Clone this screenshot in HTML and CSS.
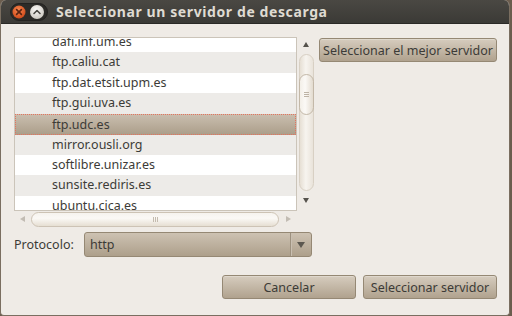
FILE: index.html
```html
<!DOCTYPE html>
<html lang="es">
<head>
<meta charset="utf-8">
<link rel="stylesheet" href="styles.css">
</head>
<body>
<div class="window">
  <div class="titlebar">
    <div class="wbuttons">
      <svg width="38" height="18" viewBox="0 0 38 18">
        <defs>
          <radialGradient id="gc" cx="0.45" cy="0.35" r="0.7">
            <stop offset="0" stop-color="#f7874f"/>
            <stop offset="1" stop-color="#cc4516"/>
          </radialGradient>
          <radialGradient id="gm" cx="0.45" cy="0.35" r="0.7">
            <stop offset="0" stop-color="#fbfaf8"/>
            <stop offset="1" stop-color="#c9c5bd"/>
          </radialGradient>
        </defs>
        <rect x="0.5" y="0.5" width="37" height="17" rx="8.5" fill="#2c2b28" stroke="#232220"/>
        <circle cx="9" cy="9" r="6.5" fill="url(#gc)"/>
        <path d="M6.6 6.6 L11.4 11.4 M11.4 6.6 L6.6 11.4" stroke="#5a2412" stroke-width="1.6" stroke-linecap="round"/>
        <circle cx="27" cy="9" r="7" fill="url(#gm)"/>
        <path d="M24 10.5 L27 7.5 L30 10.5" fill="none" stroke="#4a4843" stroke-width="1.6" stroke-linecap="round" stroke-linejoin="round"/>
      </svg>
    </div>
    <div class="title">Seleccionar un servidor de descarga</div>
  </div>
  <div class="content">
    <div class="top">
      <div class="listwrap">
        <div class="list">
          <div class="rows">
            <div class="row">dafi.inf.um.es</div>
            <div class="row alt">ftp.caliu.cat</div>
            <div class="row">ftp.dat.etsit.upm.es</div>
            <div class="row alt">ftp.gui.uva.es</div>
            <div class="row sel">ftp.udc.es</div>
            <div class="row alt">mirror.ousli.org</div>
            <div class="row">softlibre.unizar.es</div>
            <div class="row alt">sunsite.rediris.es</div>
            <div class="row">ubuntu.cica.es</div>
          </div>
        </div>
        <div class="vscroll">
          <div class="arrow up"></div>
          <div class="vtrough">
            <div class="vthumb"><span class="grip-h"></span></div>
          </div>
          <div class="arrow down"></div>
        </div>
        <div class="hscroll">
          <div class="arrow left"></div>
          <div class="htrough"><span class="grip-v"></span></div>
          <div class="arrow right"></div>
        </div>
      </div>
      <div class="side">
        <button class="btn best">Seleccionar el mejor servidor</button>
      </div>
    </div>
    <div class="protocol">
      <span class="plabel">Protocolo:</span>
      <div class="combo">
        <span class="cval">http</span>
        <span class="csep"></span>
        <span class="carrow"></span>
      </div>
    </div>
    <div class="actions">
      <button class="btn cancel">Cancelar</button>
      <button class="btn ok">Seleccionar servidor</button>
    </div>
  </div>
</div>
</body>
</html>
```
FILE: styles.css
```css
* { box-sizing: border-box; }
html, body { margin: 0; padding: 0; }
body {
  width: 512px;
  height: 316px;
  background: #6b5d4e;
  font-family: "Noto Sans", "Open Sans", sans-serif;
  font-size: 12.5px;
  color: #3c3b37;
  overflow: hidden;
}
.window {
  width: 510px;
  height: 316px;
  display: flex;
  flex-direction: column;
  background: #efebe6;
  border-radius: 6px 6px 4px 4px;
  overflow: hidden;
  border: 1px solid #7a6e60;
  border-top: none;
}
.titlebar {
  height: 24px;
  flex: none;
  display: flex;
  align-items: center;
  background: linear-gradient(#4a4843, #3b3a36);
  border-bottom: 1px solid #2a2926;
  padding-left: 9px;
}
.wbuttons { display: flex; height: 18px; }
.title {
  margin-left: 8px;
  font-weight: bold;
  font-size: 14px;
  color: #dfdbd2;
  letter-spacing: 0.6px;
}
.content {
  flex: 1;
  display: flex;
  flex-direction: column;
  padding: 13px 12px 0 13px;
}
.top { display: flex; gap: 5px; }
.listwrap {
  display: grid;
  grid-template-columns: 283px 17px;
  grid-template-rows: 174px 16px;
}
.list {
  background: #fff;
  border: 1px solid #cbc4b9;
  overflow: hidden;
}
.rows { margin-top: -6px; }
.row {
  height: 20.4px;
  line-height: 20.4px;
  padding-left: 37px;
  white-space: nowrap;
}
.row.alt { background: #edebe8; }
.row.sel {
  background: linear-gradient(#cabfb0, #ab9d89);
  outline: 1px dotted #e5735e;
  outline-offset: -1px;
  height: 21px;
  line-height: 21px;
}
.vscroll {
  display: flex;
  flex-direction: column;
  align-items: center;
  padding-left: 1px;
}
.arrow { width: 0; height: 0; border-style: solid; }
.arrow.up {
  margin-top: 5px;
  border-width: 0 3.5px 5px 3.5px;
  border-color: transparent transparent #55524c transparent;
}
.arrow.down {
  margin-top: 7px;
  border-width: 5px 3.5px 0 3.5px;
  border-color: #55524c transparent transparent transparent;
}
.vtrough {
  margin-top: 7px;
  width: 15px;
  height: 137px;
  border-radius: 8px;
  border: 1px solid #d8d0c4;
  background: linear-gradient(90deg, #e6dfd4, #f7f4ef 45%, #e9e3da);
  padding-top: 19px;
}
.vthumb {
  margin-left: -1px;
  width: 15px;
  height: 41px;
  border-radius: 8px;
  border: 1px solid #c3b8a8;
  background: linear-gradient(90deg, #f3efe8, #fbf9f6 40%, #e3dbcf);
  display: flex;
  align-items: center;
  justify-content: center;
}
.grip-h {
  width: 5px;
  height: 5px;
  border-top: 1px solid #bdb3a5;
  border-bottom: 1px solid #bdb3a5;
}
.grip-h::after {
  content: "";
  display: block;
  border-top: 1px solid #bdb3a5;
  margin-top: 1px;
}
.hscroll {
  grid-column: 1 / 3;
  display: flex;
  align-items: center;
  padding-left: 6px;
}
.arrow.left {
  border-width: 3.5px 5px 3.5px 0;
  border-color: transparent #c2bcb3 transparent transparent;
}
.arrow.right {
  margin-left: 7px;
  border-width: 3.5px 0 3.5px 5px;
  border-color: transparent transparent transparent #c2bcb3;
}
.htrough {
  margin-left: 6px;
  width: 248px;
  height: 15px;
  border-radius: 8px;
  border: 1px solid #cdc3b5;
  background: linear-gradient(#f6f3ee, #fbf9f6 40%, #e6dfd3);
  display: flex;
  align-items: center;
  justify-content: center;
}
.grip-v {
  width: 5px;
  height: 5px;
  border-left: 1px solid #c4bbae;
  border-right: 1px solid #c4bbae;
  display: flex;
  justify-content: center;
}
.grip-v::after {
  content: "";
  border-left: 1px solid #c4bbae;
}
.side { padding-top: 1px; }
.btn {
  font-family: "Noto Sans", "Open Sans", sans-serif;
  font-size: 12.5px;
  color: #3c3b37;
  height: 24px;
  padding: 0;
  border: 1px solid #958874;
  border-radius: 3px;
  background: linear-gradient(#d6ccbe, #b0a28e);
  box-shadow: inset 0 1px 0 rgba(255,255,255,0.25);
}
.best { width: 178px; }
.protocol {
  display: flex;
  align-items: center;
  margin-top: 5px;
  height: 25px;
}
.plabel { width: 70px; }
.combo {
  width: 228px;
  height: 25px;
  border: 1px solid #958874;
  border-radius: 3px;
  background: linear-gradient(#cdc2b2, #ad9f8b);
  display: flex;
  align-items: center;
  padding-left: 5px;
}
.cval { flex: 1; }
.csep {
  width: 1px;
  height: 23px;
  background: #c9bfb1;
  border-left: 1px solid #9d917f;
  box-sizing: content-box;
}
.carrow {
  width: 0;
  height: 0;
  margin: 0 6px 0 5px;
  border-style: solid;
  border-width: 6px 4px 0 4px;
  border-color: #5c5850 transparent transparent transparent;
}
.actions {
  display: flex;
  justify-content: flex-end;
  gap: 7px;
  margin-top: 18px;
}
.cancel { width: 134px; }
.ok { width: 134px; }
```
